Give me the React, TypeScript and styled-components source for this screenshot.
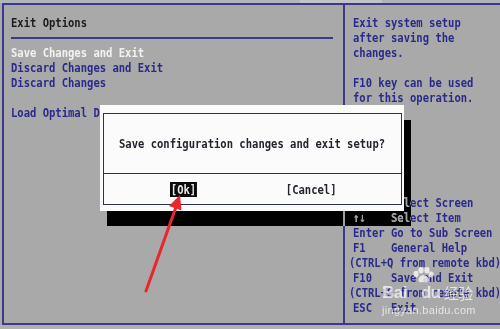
import styled, { createGlobalStyle } from "styled-components";

const GlobalStyle = createGlobalStyle`
  html, body {
    margin: 0;
    padding: 0;
    background: #acacac;
  }
`;

const BLUE = "#2a2a8a";
const LINE = "#3a3a8c";

const Screen = styled.div`
  position: relative;
  width: 500px;
  height: 329px;
  overflow: hidden;
  background: #a9a9a9;
  display: flex;
  flex-direction: column;
`;

const TopBar = styled.div`
  height: 3px;
  background: linear-gradient(90deg, #b4b4bc 0 300px, #c2c2c8 300px 382px, #b2b2ba 382px);
`;

const Frame = styled.div`
  height: 318px;
  margin-left: 2px;
  border-top: 2px solid ${LINE};
  border-left: 2px solid ${LINE};
  border-bottom: 2px solid ${LINE};
  display: flex;
`;

const BottomBar = styled.div`
  flex: 1;
  background: #b0b0b2;
`;

const LeftPanel = styled.div`
  flex: 0 0 339px;
  padding: 10px 0 0 7px;
  box-sizing: border-box;
`;

const RightPanel = styled.div`
  flex: 1;
  min-width: 0;
  border-left: 2px solid ${LINE};
  padding: 10px 0 8px 8px;
  display: flex;
  flex-direction: column;
  justify-content: space-between;
`;

// BIOS text: tall narrow mono glyphs
const Line = styled.div<{ $color?: string; $shift?: number }>`
  height: 15px;
  line-height: 15px;
  white-space: pre;
  font-family: "DejaVu Sans Mono", "Liberation Mono", monospace;
  font-weight: bold;
  font-size: 12.5px;
  color: ${(p) => p.$color || BLUE};
  transform: scaleX(0.842);
  transform-origin: left center;
  margin-left: ${(p) => p.$shift || 0}px;
`;

const Rule = styled.div`
  height: 2px;
  width: 322px;
  background: ${LINE};
  margin: 7px 0 6px 0;
`;

const Block = styled.div`
  display: flex;
  flex-direction: column;
`;

const Shadow = styled.div`
  position: absolute;
  left: 107px;
  top: 120px;
  width: 304px;
  height: 106px;
  background: rgba(0, 0, 0, 0.1);
  backdrop-filter: grayscale(1) invert(1) contrast(3) brightness(0.7);
`;

const Dialog = styled.div`
  position: absolute;
  left: 100px;
  top: 105px;
  width: 304px;
  height: 106px;
  background: #fbfbfb;
  padding: 8px 2px 8px 3px;
  box-sizing: border-box;
`;

const DialogInner = styled.div`
  height: 100%;
  border: 1px solid #2e2e5e;
  display: flex;
  flex-direction: column;
`;

const Question = styled.div`
  height: 59px;
  border-bottom: 1px solid #2e2e5e;
  display: flex;
  align-items: center;
  justify-content: center;
`;

const DialogText = styled.div`
  white-space: pre;
  font-family: "DejaVu Sans Mono", "Liberation Mono", monospace;
  font-weight: bold;
  font-size: 12.5px;
  line-height: 15px;
  color: #242430;
  transform: scaleX(0.842);
`;

const Buttons = styled.div`
  flex: 1;
  display: flex;
  align-items: center;
  padding-left: 66px;
  gap: 83px;
`;

const Button = styled.div<{ $active?: boolean }>`
  white-space: pre;
  font-family: "DejaVu Sans Mono", "Liberation Mono", monospace;
  font-weight: bold;
  font-size: 12.5px;
  line-height: 15px;
  padding: 0 1px;
  background: ${(p) => (p.$active ? "#0a0a0a" : "transparent")};
  color: ${(p) => (p.$active ? "#e8e8e8" : "#242430")};
  transform: scaleX(0.842);
  transform-origin: left center;
`;

const Overlay = styled.svg`
  position: absolute;
  left: 0;
  top: 0;
  pointer-events: none;
`;

const Watermark = styled.div`
  position: absolute;
  left: 382px;
  top: 283px;
  color: rgba(255, 255, 255, 0.7);
  font-family: "Liberation Sans", Arial, sans-serif;
  pointer-events: none;
`;

const Brand = styled.div`
  display: flex;
  align-items: flex-end;
  font-size: 17px;
  font-weight: bold;
  line-height: 20px;
  letter-spacing: -0.5px;
`;

const Cjk = styled.span`
  font-family: "Noto Sans CJK SC", sans-serif;
  font-size: 15px;
  font-weight: normal;
  margin-left: 3px;
`;

const Site = styled.div`
  font-size: 11px;
  line-height: 13px;
  margin-top: 1px;
  letter-spacing: 0.3px;
`;

const Paw = styled.svg`
  position: absolute;
  left: 30px;
  top: -16px;
`;

const menu = [
  { text: "Save Changes and Exit", color: "#f2f2f2" },
  { text: "Discard Changes and Exit" },
  { text: "Discard Changes" },
  { text: " " },
  { text: "Load Optimal Defaults" },
];

const help = ["Exit system setup", "after saving the", "changes.", " ", "F10 key can be used", "for this operation."];

const keys: { text: string; shift?: number }[] = [
  { text: "\u2192\u2190    Select Screen" },
  { text: "\u2191\u2193    Select Item" },
  { text: "Enter Go to Sub Screen" },
  { text: "F1    General Help" },
  { text: "(CTRL+Q from remote kbd)", shift: -4 },
  { text: "F10   Save and Exit" },
  { text: "(CTRL+S from remote kbd)", shift: -4 },
  { text: "ESC   Exit" },
];

export default function App() {
  return (
    <>
      <GlobalStyle />
      <Screen>
        <TopBar />
        <Frame>
          <LeftPanel>
            <Line $color="#1c1c1c">Exit Options</Line>
            <Rule />
            {menu.map((m, i) => (
              <Line key={i} $color={m.color}>
                {m.text}
              </Line>
            ))}
          </LeftPanel>
          <RightPanel>
            <Block>
              {help.map((h, i) => (
                <Line key={i}>{h}</Line>
              ))}
            </Block>
            <Block>
              {keys.map((k, i) => (
                <Line key={i} $shift={k.shift}>
                  {k.text}
                </Line>
              ))}
            </Block>
          </RightPanel>
        </Frame>
        <BottomBar />

        <Shadow />
        <Dialog>
          <DialogInner>
            <Question>
              <DialogText>Save configuration changes and exit setup?</DialogText>
            </Question>
            <Buttons>
              <Button $active>[Ok]</Button>
              <Button>[Cancel]</Button>
            </Buttons>
          </DialogInner>
        </Dialog>

        <Overlay width="500" height="329" viewBox="0 0 500 329">
          <line x1="146" y1="291" x2="176" y2="207" stroke="#e8262c" strokeWidth="3" strokeLinecap="round" />
          <polygon points="180,195 181.5,210.5 169,206" fill="#e8262c" />
        </Overlay>

        <Watermark>
          <Paw width="22" height="16" viewBox="0 0 22 16">
            <g fill="rgba(255,255,255,0.75)">
              <ellipse cx="4" cy="7" rx="2.6" ry="3.2" />
              <ellipse cx="9" cy="3.2" rx="2.6" ry="3.2" />
              <ellipse cx="15" cy="3.2" rx="2.6" ry="3.2" />
              <ellipse cx="19.2" cy="7.5" rx="2.4" ry="3" />
              <path d="M11.5 8 C8 8 5.5 12.5 7 14.5 C8.5 16 10 15 11.5 15 C13 15 15 16 16.5 14.5 C18 12.5 15 8 11.5 8 Z" />
            </g>
          </Paw>
          <Brand>
            Bai<span style={{ marginLeft: 14 }}>du</span>
            <Cjk>经验</Cjk>
          </Brand>
          <Site>jingyan.baidu.com</Site>
        </Watermark>
      </Screen>
    </>
  );
}
